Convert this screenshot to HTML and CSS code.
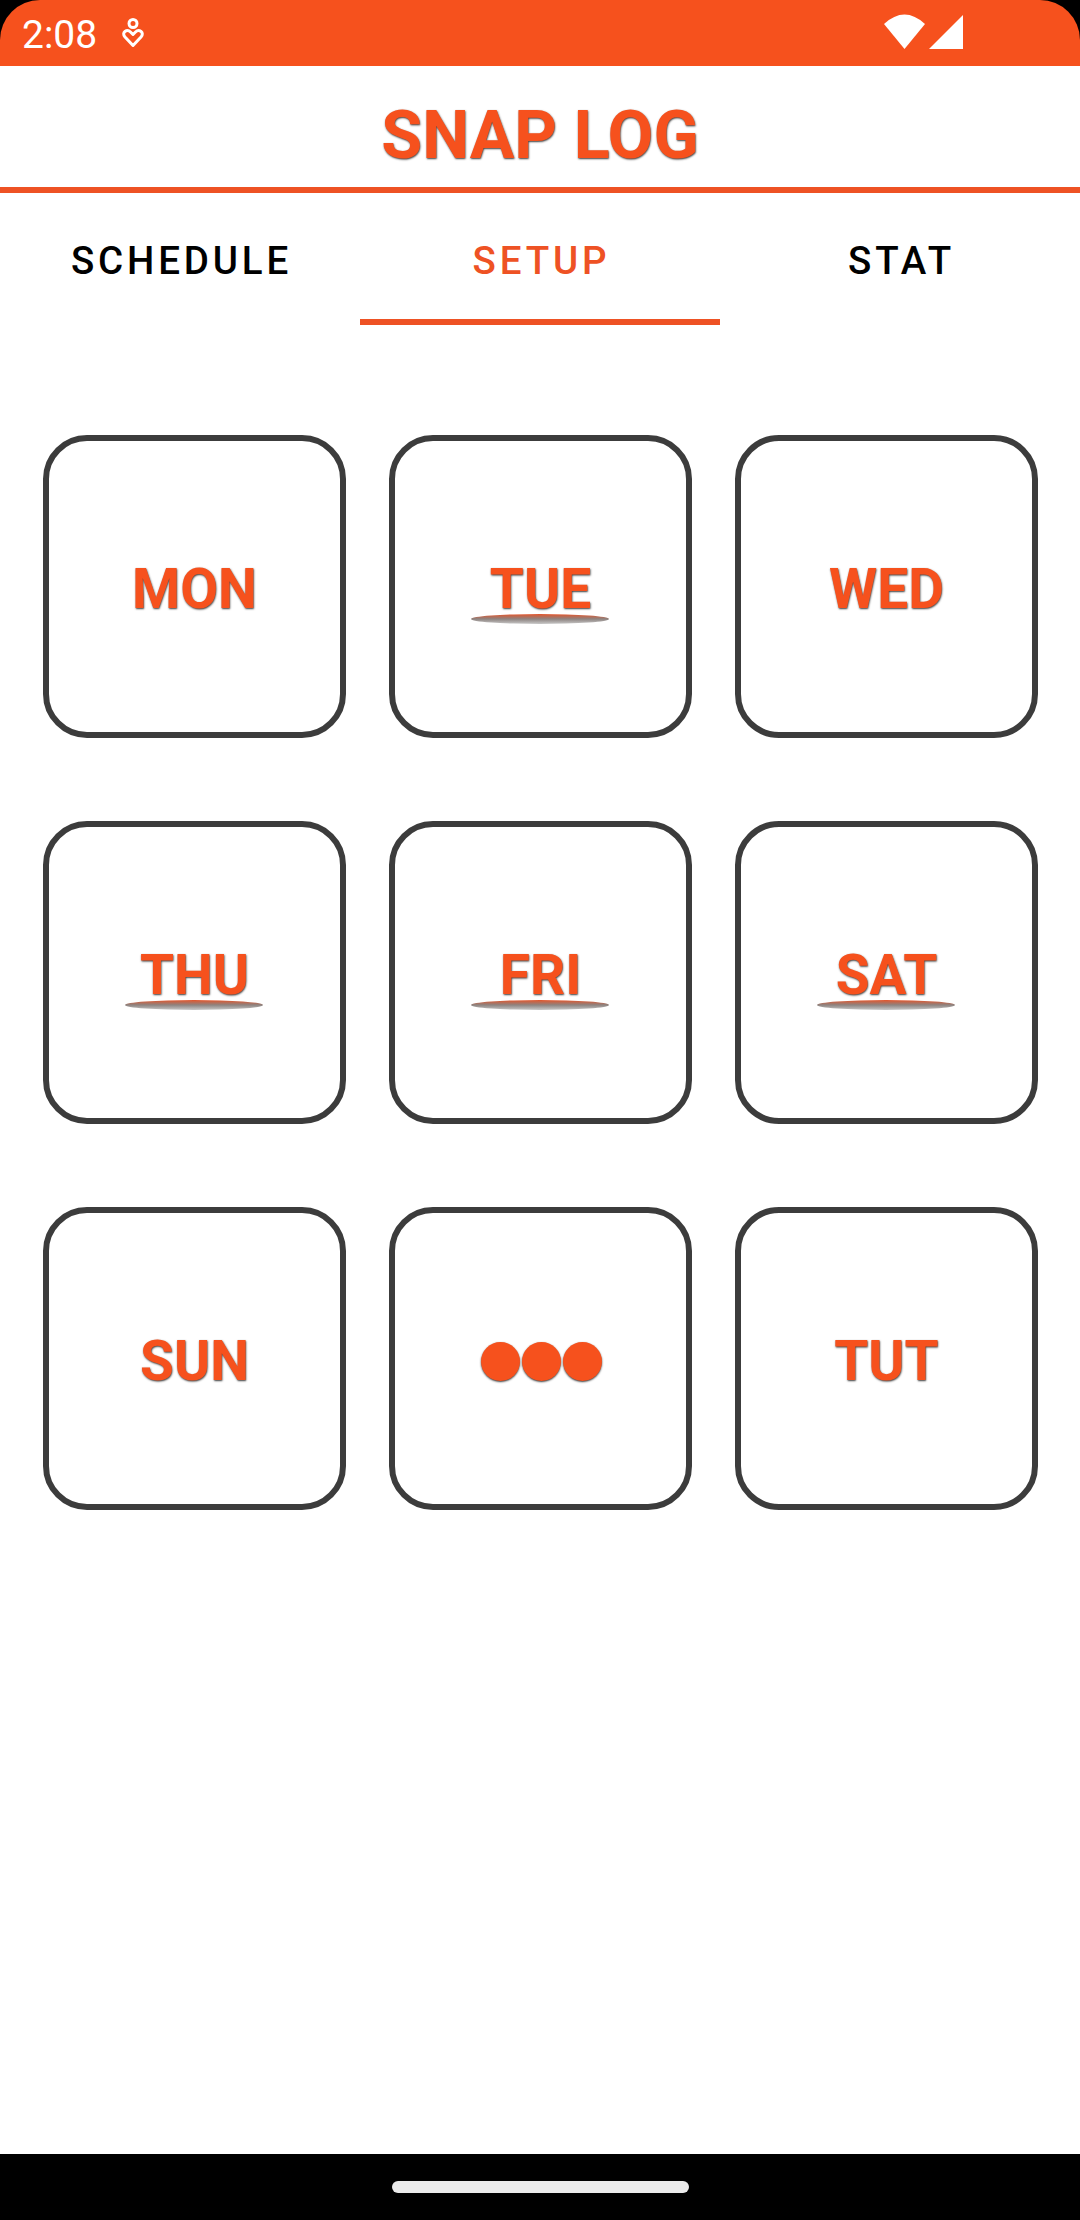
FILE: index.html
```html
<!DOCTYPE html>
<html lang="en">
<head>
    <meta charset="UTF-8">
    <meta name="viewport" content="width=device-width, initial-scale=1.0">
    <title>Snap Log</title>
    <link rel="stylesheet" href="styles.css">
</head>
<body>
    <div class="status-bar">
        <span class="time">2:08</span>
        <svg class="heart-icon" width="24" height="32" viewBox="0 0 24 32">
            <circle cx="12" cy="6.5" r="4" />
            <path d="M12 28.5 L4 20 C0 15.500 6 11.500 9.500 15 L12 17.500 L14.500 15 C18 11.500 24 15.500 20 20 Z" />
        </svg>
        <svg class="signal-icons" width="80" height="36" viewBox="0 0 80 36">
            <path d="M0 10 Q20.500 -9 41 10 L20.500 35 Z" />
            <path d="M45 35 L79 1 V35 Z" />
        </svg>
    </div>

    <header>
        <h1>SNAP LOG</h1>
    </header>

    <nav class="tabs">
        <a class="tab">SCHEDULE</a>
        <a class="tab active">SETUP</a>
        <a class="tab">STAT</a>
    </nav>

    <main class="days">
        <button class="day">MON</button>
        <button class="day marked">TUE</button>
        <button class="day">WED</button>
        <button class="day marked">THU</button>
        <button class="day marked">FRI</button>
        <button class="day marked">SAT</button>
        <button class="day">SUN</button>
        <button class="day more" aria-label="More">
            <span class="dot"></span>
            <span class="dot"></span>
            <span class="dot"></span>
        </button>
        <button class="day">TUT</button>
    </main>

    <footer>
        <div class="home-pill"></div>
    </footer>
</body>
</html>
```
FILE: styles.css
```css
* {
    box-sizing: border-box;
}

html {
    background: #000;
}

body {
    font-family: Roboto, "Liberation Sans", sans-serif;
    margin: 0;
    height: 2220px;
    display: flex;
    flex-direction: column;
    background: #000;
}

.status-bar {
    height: 66px;
    flex-shrink: 0;
    display: flex;
    align-items: flex-start;
    padding: 0 116px 0 22px;
    background: #f6511d;
    border-radius: 40px 40px 0 0;
    color: #fff;
}

.time {
    width: 99px;
    font-size: 39px;
    line-height: 70px;
}

.heart-icon {
    margin-top: 17px;
    fill: none;
    stroke: #fff;
    stroke-width: 3;
    stroke-linejoin: round;
}

.signal-icons {
    margin: 14px 0 0 auto;
    fill: #fff;
}

header {
    height: 127px;
    background: #fff;
    border-bottom: 6px solid #ee5224;
    text-align: center;
}

h1 {
    margin: 0;
    font-size: 66.5px;
    font-weight: bold;
    line-height: 139px;
    color: #f6511d;
    text-shadow: 0.5px 1px 2px #3c3c3c;
}

.tabs {
    height: 132px;
    display: flex;
    background: #fff;
}

.tab {
    flex: 1;
    padding: 13px 0 0 3px;
    border-bottom: 6px solid transparent;
    text-align: center;
    font-size: 38.5px;
    font-weight: 500;
    line-height: 110px;
    letter-spacing: 3.85px;
    color: #000;
}

.tab.active {
    color: #ee5224;
    border-color: #ee5224;
}

.days {
    flex: 1;
    display: grid;
    grid-template-columns: repeat(3, 303px);
    grid-auto-rows: 303px;
    gap: 83px 43px;
    padding: 110px 43px 0;
    background: #fff;
}

.day {
    position: relative;
    display: flex;
    align-items: center;
    justify-content: center;
    padding: 4px 0 0;
    border: 6px solid #3c3c3c;
    border-radius: 44px;
    background: #fff;
    font-family: inherit;
    font-size: 55px;
    font-weight: bold;
    color: #f6511d;
    text-shadow: 0.5px 1px 2px #3c3c3c;
}

/* flat ellipse under days that have a schedule */
.day.marked::after {
    content: "";
    position: absolute;
    left: 76px;
    top: 173px;
    width: 138px;
    height: 10px;
    border-radius: 50%;
    background: linear-gradient(#e4552b, #8d8380 50%, #c8c8c8);
}

.day.more {
    gap: 2px;
    padding: 6px 0 0 2px;
}

.dot {
    width: 39px;
    height: 39px;
    border-radius: 50%;
    background: #f6511d;
    box-shadow: 0 1px 2px #3c3c3c;
}

footer {
    height: 66px;
    display: flex;
    justify-content: center;
    padding-top: 27px;
    background: #000;
}

.home-pill {
    width: 297px;
    height: 12px;
    border-radius: 6px;
    background: #ebebeb;
}
```
